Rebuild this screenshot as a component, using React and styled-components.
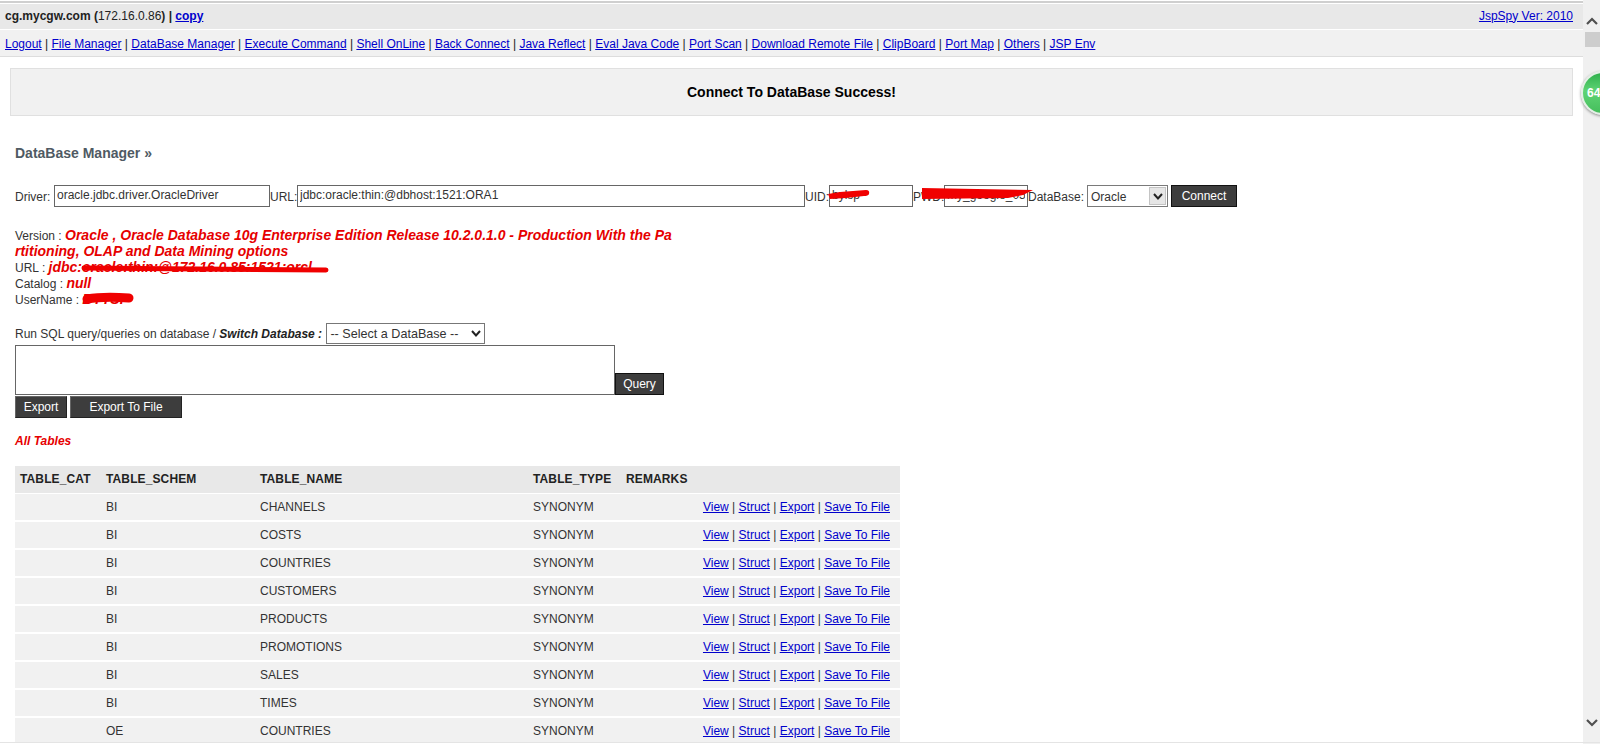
import React from "react";
import styled, { createGlobalStyle } from "styled-components";

const Global = createGlobalStyle`
  html, body { margin: 0; padding: 0; height: 100%; overflow: hidden; background: #fff; }
  body { font: 12px/16px "Liberation Sans", Arial, sans-serif; color: #222; }
  a { color: #0000cc; text-decoration: underline; }
`;

const Page = styled.div`position: relative; display: flex; width: 1600px; height: 744px; overflow: hidden; background: #fff;`;
const Main = styled.div`flex: 1; min-width: 0; height: 742px; overflow: hidden; border-top: 2px solid #cfcfcf; box-sizing: border-box; margin-top: 1px; padding-top: 1px;`;
const HeadBar = styled.div`display: flex; justify-content: space-between; align-items: center; height: 25px; box-sizing: border-box; padding: 0 10px 2px 5px; background: #e8e8e8; font-size: 12px;`;
const HeadInfo = styled.b`font-weight: bold; color: #222; span { font-weight: normal; }`;
const MenuBar = styled.div`height: 27px; line-height: 28px; margin-top: 1px; padding: 0 5px; background: #f1f1f1; border-bottom: 1px solid #ddd; box-sizing: border-box; white-space: nowrap;`;
const Content = styled.div`padding: 11px 10px 0;`;
const Notice = styled.div`height: 48px; width: 1563px; box-sizing: border-box; background: #f1f1f1; border: 1px solid #e0e0e0; display: flex; align-items: center; justify-content: center; font: bold 14px "Liberation Sans", Arial, sans-serif; color: #000;`;
const Section = styled.div`padding-left: 5px;`;
const Title = styled.h2`margin: 28px 0 0; font: bold 14px/18px "Liberation Sans", Arial, sans-serif; color: #4f5a63;`;
const ConnectRow = styled.div`display: flex; align-items: flex-start; height: 22px; margin-top: 23px; white-space: nowrap; color: #333;`;
const Label = styled.label`display: block; flex: none; line-height: 15px; padding-top: 5px; width: ${p => p.$w}px; box-sizing: border-box;`;
const FieldWrap = styled.div`position: relative; flex: none; width: ${p => p.$w}px; height: 22px;`;
const Field = styled.input`display: block; width: 100%; height: 100%; box-sizing: border-box; border: 1px solid #666; padding: 0 2px 3px; font: 12px "Liberation Sans", Arial, sans-serif; color: #333; background: #fff; outline: none;`;
const SelectWrap = styled.div`position: relative; width: ${p => p.$w}px; height: ${p => p.$h}px; flex: none; margin-left: ${p => p.$ml || 0}px;`;
const Select = styled.select`appearance: none; display: block; width: 100%; height: 100%; box-sizing: border-box; border: 1px solid ${p => p.$line}; border-radius: 0; background: #fff; color: #333; padding: ${p => p.$pt || 0}px 0 0 3px; font: ${p => p.$fs}px "Liberation Sans", Arial, sans-serif;`;
const Chevron = styled.div`position: absolute; top: ${p => p.$boxed ? 2 : 0}px; right: ${p => p.$boxed ? 2 : 1}px; bottom: ${p => p.$boxed ? 2 : 0}px; width: 17px; display: flex; align-items: center; justify-content: center; background: ${p => p.$boxed ? "#e6e6e6" : "transparent"}; ${p => p.$boxed ? "border: 1px solid #c4c4c4; box-sizing: border-box;" : ""} pointer-events: none;`;
const Btn = styled.button`display: block; flex: none; width: ${p => p.$w}px; height: ${p => p.$h}px; box-sizing: border-box; padding: 0 0 1px; background: #3d3d3d; color: #fff; font: 12px "Liberation Sans", Arial, sans-serif; border: 1px solid ${p => p.$dark ? "#111" : "#666"}; ${p => p.$dark ? "" : "border-right-color:#222;border-bottom-color:#222;"}`;
const Gap = styled.div`flex: none; width: ${p => p.$w}px;`;
const Info = styled.div`position: relative; margin-top: 21px; width: 660px; word-break: break-all; line-height: 16px; color: #333;`;
const Val = styled.em`font: italic bold 14px/14px "Liberation Sans", Arial, sans-serif; color: #e60000;`;
const Swipe = styled.svg`position: absolute; overflow: visible; pointer-events: none; left: ${p => p.$x}px; top: ${p => p.$y}px;`;
const SqlLine = styled.div`display: flex; align-items: center; height: 21px; margin-top: 15px; color: #333; white-space: pre; b { font-style: italic; color: #222; }`;
const SqlArea = styled.div`display: flex; align-items: flex-end; margin-top: 1px;`;
const TextBox = styled.textarea`display: block; width: 600px; height: 50px; box-sizing: border-box; border: 1px solid #666; background: #fff; resize: none; outline: none; margin: 0;`;
const ExportRow = styled.div`display: flex; gap: 3px; margin-top: 1px;`;
const AllTables = styled.div`margin-top: 15px; font: italic bold 12px/16px "Liberation Sans", Arial, sans-serif; color: #e60000;`;
const Table = styled.table`margin-top: 17px; width: 885px; table-layout: fixed; border-collapse: collapse; font-size: 12px; color: #333;`;
const HeadCell = styled.th`height: 27px; padding: 0 0 0 5px; background: #e8e8e8; text-align: left; font-weight: bold; letter-spacing: .12px; color: #222; white-space: nowrap; border-bottom: 1px solid #fff; box-sizing: border-box;`;
const Cell = styled.td`height: 28px; padding: 0 0 0 5px; background: #f1f1f1; border-bottom: 2px solid #fff; box-sizing: border-box; white-space: nowrap;`;
const ActionCell = styled(Cell)`text-align: right; padding-right: 10px;`;
const ScrollBar = styled.div`flex: none; width: 17px; height: 744px; box-sizing: border-box; padding: 17px 0 17px 1px; background: #f0f0f0; display: flex; flex-direction: column; align-items: center;`;
const Thumb = styled.div`width: 15px; height: 15px; margin-top: 7px; background: #cdcdcd;`;
const Spring = styled.div`flex: 1;`;
const Badge = styled.div`position: absolute; left: 1581px; top: 71px; width: 44px; height: 44px; box-sizing: border-box; border-radius: 50%; border: 2px solid #e4efe6; box-shadow: 0 1px 3px rgba(0,0,0,.45); background: linear-gradient(#2fb04c, #5fd474 45%, #45be5c); color: #fff; font: bold 12px/40px "Liberation Sans", Arial, sans-serif; padding-left: 4px;`;
const BottomLine = styled.div`position: absolute; left: 0; right: 0; bottom: 1px; height: 1px; background: #e4e4e4;`;

const menu = ["Logout","File Manager","DataBase Manager","Execute Command","Shell OnLine","Back Connect","Java Reflect","Eval Java Code","Port Scan","Download Remote File","ClipBoard","Port Map","Others","JSP Env"];
const rows = [["BI","CHANNELS"],["BI","COSTS"],["BI","COUNTRIES"],["BI","CUSTOMERS"],["BI","PRODUCTS"],["BI","PROMOTIONS"],["BI","SALES"],["BI","TIMES"],["OE","COUNTRIES"]];
const acts = ["View","Struct","Export","Save To File"];

const Arrow = ({ up }) => (
  <svg width="12" height="8" viewBox="0 0 12 8"><path d={up ? "M1 7 L6 2 L11 7" : "M1 1 L6 6 L11 1"} fill="none" stroke="#505050" strokeWidth="2.2" /></svg>
);
const Mini = () => (
  <svg width="10" height="7" viewBox="0 0 10 7"><path d="M1 1 L5 5.5 L9 1" fill="none" stroke="#222" strokeWidth="2" /></svg>
);

export default function App() {
  return (
    <Page>
      <Global />
      <Main>
        <HeadBar>
          <HeadInfo>cg.mycgw.com (<span>172.16.0.86</span>) | <a href="#">copy</a></HeadInfo>
          <a href="#">JspSpy Ver: 2010</a>
        </HeadBar>
        <MenuBar>
          {menu.map((m, i) => <React.Fragment key={m}>{i > 0 && " | "}<a href="#">{m}</a></React.Fragment>)}
        </MenuBar>
        <Content>
          <Notice>Connect To DataBase Success!</Notice>
          <Section>
            <Title>DataBase Manager »</Title>
            <ConnectRow>
              <Label $w={39}>Driver:</Label>
              <FieldWrap $w={216}><Field defaultValue="oracle.jdbc.driver.OracleDriver" /></FieldWrap>
              <Label $w={27}>URL:</Label>
              <FieldWrap $w={508}><Field defaultValue="jdbc:oracle:thin:@dbhost:1521:ORA1" /></FieldWrap>
              <Label $w={24}>UID:</Label>
              <FieldWrap $w={84}>
                <Field defaultValue="bylsp" />
                <Swipe $x={-1} $y={5} width="42" height="9" viewBox="0 0 42 9"><path d="M0 4 L12 2 L38 0 Q42 0 41 4 Q40 6 36 6 L18 8 L2 9 Z" fill="#f00000" /></Swipe>
              </FieldWrap>
              <Label $w={31}>PWD:</Label>
              <FieldWrap $w={84}>
                <Field defaultValue="my_google_05" />
                <Swipe $x={-22} $y={3} width="111" height="11" viewBox="0 0 111 11"><path d="M0 0 L111 2 L101 7 L86 10 L0 11 Z" fill="#f00000" /></Swipe>
              </FieldWrap>
              <Label $w={59}>DataBase:</Label>
              <SelectWrap $w={81} $h={22}>
                <Select $fs={12} $line="#7a7a7a" $pt={1}><option>Oracle</option></Select>
                <Chevron $boxed><Mini /></Chevron>
              </SelectWrap>
              <Gap $w={3} />
              <Btn $w={66} $h={22} $dark>Connect</Btn>
            </ConnectRow>
            <Info>
              Version : <Val>Oracle , Oracle Database 10g Enterprise Edition Release 10.2.0.1.0 - Production With the Partitioning, OLAP and Data Mining options</Val><br />
              URL : <Val>jdbc:oracle:thin:@172.16.0.85:1521:orcl</Val><br />
              Catalog : <Val>null</Val><br />
              UserName : <Val>BYTSP</Val>
              <Swipe $x={67} $y={37} width="246" height="8" viewBox="0 0 246 8"><path d="M2 3 C90 4 170 5 244 5" fill="none" stroke="#f00000" strokeWidth="5" strokeLinecap="round" /></Swipe>
              <Swipe $x={67} $y={65} width="52" height="11" viewBox="0 0 52 11"><path d="M5 6 C16 4 34 4 47 5" fill="none" stroke="#f00000" strokeWidth="9" strokeLinecap="round" /></Swipe>
            </Info>
            <SqlLine>
              Run SQL query/queries on database / <b>Switch Database : </b>
              <SelectWrap $w={159} $h={21} $ml={1}>
                <Select $fs={12.6} $line="#777"><option>-- Select a DataBase --</option></Select>
                <Chevron><Mini /></Chevron>
              </SelectWrap>
            </SqlLine>
            <SqlArea>
              <TextBox />
              <Btn $w={49} $h={22} $dark>Query</Btn>
            </SqlArea>
            <ExportRow>
              <Btn $w={52} $h={22}>Export</Btn>
              <Btn $w={112} $h={22}>Export To File</Btn>
            </ExportRow>
            <AllTables>All Tables</AllTables>
            <Table>
              <colgroup><col width="86" /><col width="154" /><col width="273" /><col width="93" /><col width="65" /><col width="214" /></colgroup>
              <thead>
                <tr>
                  {["TABLE_CAT","TABLE_SCHEM","TABLE_NAME","TABLE_TYPE","REMARKS",""].map((h, i) => <HeadCell key={i}>{h}</HeadCell>)}
                </tr>
              </thead>
              <tbody>
                {rows.map((r, i) => (
                  <tr key={i}>
                    <Cell />
                    <Cell>{r[0]}</Cell>
                    <Cell>{r[1]}</Cell>
                    <Cell>SYNONYM</Cell>
                    <Cell />
                    <ActionCell>
                      {acts.map((a, j) => <React.Fragment key={a}>{j > 0 && " | "}<a href="#">{a}</a></React.Fragment>)}
                    </ActionCell>
                  </tr>
                ))}
              </tbody>
            </Table>
          </Section>
        </Content>
      </Main>
      <ScrollBar>
        <Arrow up />
        <Thumb />
        <Spring />
        <Arrow />
      </ScrollBar>
      <BottomLine />
      <Badge>64</Badge>
    </Page>
  );
}
